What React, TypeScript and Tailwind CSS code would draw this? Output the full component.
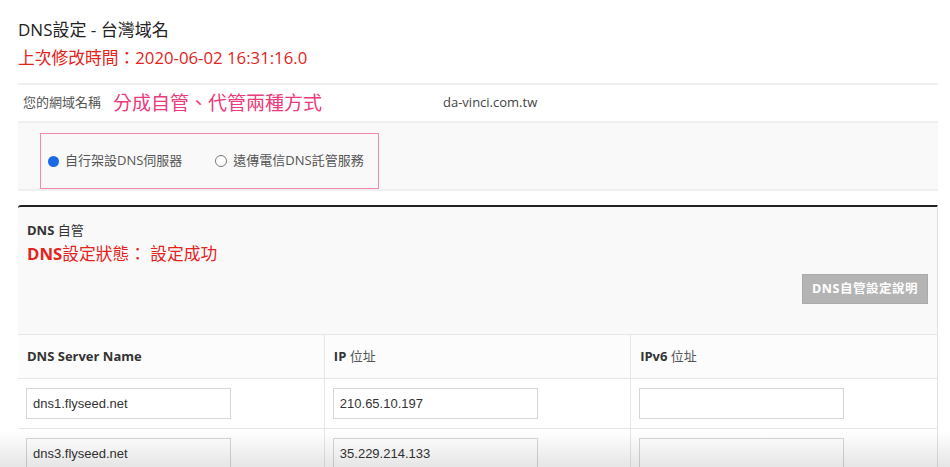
import React from "react";

const font = { fontFamily: '"Open Sans", "Noto Sans CJK TC", sans-serif' };

export default function App() {
  const servers = [
    { name: "dns1.flyseed.net", ip: "210.65.10.197", ipv6: "" },
    { name: "dns3.flyseed.net", ip: "35.229.214.133", ipv6: "" },
  ];

  return (
    <div className="relative h-[467px] w-[950px] overflow-hidden bg-white" style={font}>
      <div className="px-[18px] pr-[12px]">
        {/* Title */}
        <h1 className="pt-[18px] text-[17px] leading-[24px] text-[#222]">DNS設定 - 台灣域名</h1>
        <p className="mt-[4px] text-[16.75px] leading-[24px] text-[#e3231c]">
          上次修改時間：2020-06-02 16:31:16.0
        </p>

        {/* Domain row */}
        <div className="mt-[13px] flex h-[38px] items-center border-t-2 border-[#efefef] pl-[5px]">
          <span className="w-[90px] text-[13px] text-[#555]">您的網域名稱</span>
          <span className="w-[330px] text-[19px] text-[#ec3a7c]">分成自管、代管兩種方式</span>
          <span className="text-[13px] text-[#444]">da-vinci.com.tw</span>
        </div>

        {/* Mode selector */}
        <div className="h-[70px] border-y-2 border-[#efefef] bg-[#f9f9f9] pl-[22px] pt-[10px]">
          <div className="flex h-[56px] w-[339px] items-center gap-[33px] border border-[#f28aa8] pl-[7px]">
            <label className="flex items-center gap-[6px] text-[13px] text-[#555]">
              <span className="h-[11px] w-[11px] rounded-full bg-[#1a6ae8]" />
              自行架設DNS伺服器
            </label>
            <label className="flex items-center gap-[6px] text-[13px] text-[#555]">
              <span className="h-[12px] w-[12px] rounded-full border border-[#777] bg-white" />
              遠傳電信DNS託管服務
            </label>
          </div>
        </div>

        {/* DNS panel */}
        <div className="mt-[14px] rounded-tl-[3px] border-t-2 border-r border-[#e2e2e2] border-t-[#222] bg-[#f9f9f9]">
          <div className="h-[127px] px-[9px] pt-[14px]">
            <div className="text-[13px] leading-[18px] text-[#333]">
              <span className="font-bold">DNS</span> 自管
            </div>
            <div className="mt-[3px] text-[16.75px] leading-[24px] text-[#e3231c]">
              <span className="font-bold">DNS</span>設定狀態： 設定成功
            </div>
            <div className="mt-[8px] flex justify-end">
              <button className="h-[30px] w-[126px] border border-[#aaa] bg-[#b4b4b4] text-[12.5px] font-bold tracking-[0.5px] text-white">
                DNS自管設定說明
              </button>
            </div>
          </div>

          <table className="w-full table-fixed border-collapse bg-white text-left">
            <thead>
              <tr className="h-[44px] border-t border-[#e6e6e6] bg-[#fcfcfc]">
                <th className="border-r border-[#e6e6e6] px-[9px] text-[13px] font-bold text-[#333]">
                  DNS Server Name
                </th>
                <th className="border-r border-[#e6e6e6] px-[9px] text-[13px] text-[#333]">
                  <span className="font-bold">IP</span> <span className="font-normal text-[#555]">位址</span>
                </th>
                <th className="px-[9px] text-[13px] text-[#333]">
                  <span className="font-bold">IPv6</span> <span className="font-normal text-[#555]">位址</span>
                </th>
              </tr>
            </thead>
            <tbody>
              {servers.map((s) => (
                <tr key={s.name} className="h-[50px] border-t border-[#e6e6e6]">
                  {[s.name, s.ip, s.ipv6].map((v, i) => (
                    <td
                      key={i}
                      className={`px-[8px] ${i < 2 ? "border-r border-[#e6e6e6]" : ""}`}
                    >
                      <input
                        readOnly
                        value={v}
                        className="h-[31px] w-[205px] border border-[#d6d6d6] bg-white px-[6px] text-[13px] text-[#333] outline-none"
                        style={{ fontFamily: '"Liberation Sans", Arial, sans-serif' }}
                      />
                    </td>
                  ))}
                </tr>
              ))}
            </tbody>
          </table>
        </div>
      </div>

      {/* bottom fade overlay */}
      <div className="pointer-events-none absolute inset-x-0 bottom-0 h-[36px] bg-gradient-to-b from-transparent to-black/10" />
    </div>
  );
}
